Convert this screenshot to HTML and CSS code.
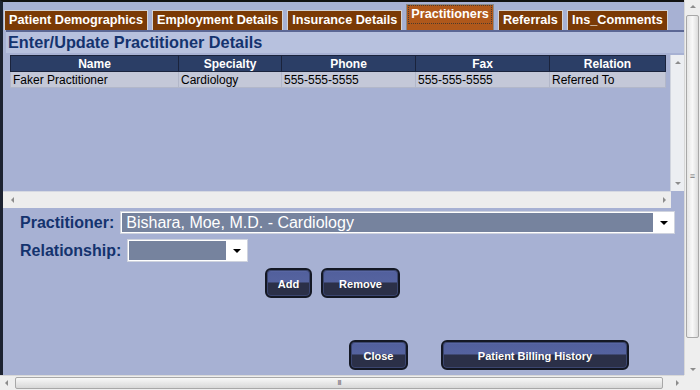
FILE: index.html
```html
<!DOCTYPE html>
<html lang="en">
<head>
  <meta charset="UTF-8">
  <title>Practitioners</title>
  <link rel="stylesheet" href="styles.css">
</head>
<body>
  <div class="window">
    <div class="viewport">
      <div class="tabs">
        <div class="tab">Patient Demographics</div>
        <div class="tab">Employment Details</div>
        <div class="tab">Insurance Details</div>
        <div class="tab active"><span>Practitioners</span></div>
        <div class="tab">Referrals</div>
        <div class="tab">Ins_Comments</div>
      </div>

      <div class="title">Enter/Update Practitioner Details</div>

      <div class="gridbox">
        <div class="grid-main">
          <div class="grid-table">
            <table>
              <tr>
                <th class="c-name">Name</th>
                <th class="c-spec">Specialty</th>
                <th class="c-phone">Phone</th>
                <th class="c-fax">Fax</th>
                <th class="c-rel">Relation</th>
              </tr>
              <tr>
                <td>Faker Practitioner</td>
                <td>Cardiology</td>
                <td>555-555-5555</td>
                <td>555-555-5555</td>
                <td>Referred To</td>
              </tr>
            </table>
          </div>
          <div class="vbar small">
            <span class="arr up"></span>
            <span class="arr down"></span>
          </div>
        </div>
        <div class="hbar small">
          <span class="arr left"></span>
          <span class="arr right"></span>
        </div>
      </div>

      <div class="form">
        <div class="form-row">
          <label class="lbl">Practitioner:</label>
          <div class="select wide">
            <div class="sel-value">Bishara, Moe, M.D. - Cardiology</div>
            <span class="caret"></span>
          </div>
        </div>
        <div class="form-row">
          <label class="lbl">Relationship:</label>
          <div class="select narrow">
            <div class="sel-value"></div>
            <span class="caret"></span>
          </div>
        </div>
      </div>

      <div class="actions">
        <button class="btn b-add">Add</button>
        <button class="btn b-remove">Remove</button>
      </div>

      <div class="footer">
        <button class="btn b-close">Close</button>
        <button class="btn b-history">Patient Billing History</button>
      </div>
    </div>

    <div class="vbar outer">
      <span class="arr up"></span>
      <div class="thumb-v"><span class="grip">&#8801;</span></div>
      <span class="arr down"></span>
    </div>
    <div class="hbar outer">
      <span class="arr left"></span>
      <div class="thumb-h"><span class="grip">III</span></div>
      <span class="arr right"></span>
    </div>
    <div class="corner"></div>
  </div>
</body>
</html>
```

FILE: styles.css
```css
body {
  margin: 0;
  font-family: 'Liberation Sans', Arial, sans-serif;
  overflow: hidden;
}

.window {
  width: 700px;
  height: 390px;
  display: grid;
  grid-template-columns: 1fr 16px;
  grid-template-rows: 1fr 15px;
  background: #f0f0f0;
}

.viewport {
  background: #a7b1d3;
  border-top: 2px solid #111;
  border-left: 3px solid #1c2230;
  overflow: hidden;
}

/* tabs */
.tabs {
  display: flex;
  align-items: flex-end;
  gap: 4px;
  padding: 6px 0 0 1px;
  height: 22px;
}

.tab {
  flex-shrink: 0;
  white-space: nowrap;
  background: #7a3a05;
  color: #fff;
  font-weight: bold;
  font-size: 12.7px;
  height: 19px;
  line-height: 19px;
  padding: 0 4px;
  border: 1px solid #d4d4d4;
  border-bottom: none;
}

.tab.active {
  background: #b0581b;
  height: 21px;
  line-height: 17px;
  padding: 1px 2px 3px;
  border-color: #8a8a8a;
}

.tab.active span {
  display: block;
  padding: 0 2px;
  outline: 1px dotted #4d3a2c;
}

.title {
  margin-left: 3px;
  background: #b7c1de;
  border-top: 2px solid #5b6794;
  color: #14336e;
  font-weight: bold;
  font-size: 16.3px;
  height: 21px;
  line-height: 20px;
  padding-left: 2px;
}

/* practitioner grid */
.gridbox {
  margin-top: 2px;
  display: flex;
  flex-direction: column;
}

.grid-main {
  display: flex;
  height: 136px;
}

.grid-table {
  flex: 1;
  padding-left: 7px;
}

table {
  border-collapse: collapse;
  width: 656px;
  font-size: 12px;
}

th {
  background: #2b3e66;
  color: #fff;
  font-weight: bold;
  height: 15px;
  padding: 0;
  border: 1px solid #1a233c;
}

td {
  background: #c4c8d8;
  color: #000;
  height: 15px;
  padding: 0 0 0 2px;
  border: 1px solid #b2b7c9;
  text-align: left;
}

.c-name { width: 167px; }
.c-spec { width: 102px; }
.c-phone { width: 133px; }
.c-fax { width: 133px; }

.vbar {
  background: #eceef2;
  position: relative;
}

.vbar.small {
  width: 13px;
  border-left: 1px solid #d0d4de;
}

.hbar {
  background: #ededed;
  position: relative;
}

.hbar.small {
  height: 16px;
  margin-right: 13px;
  border-top: 1px solid #d6d9e2;
}

.arr {
  position: absolute;
  width: 0;
  height: 0;
  border: 3px solid transparent;
}

.arr.up {
  top: 6px;
  left: 4px;
  border-bottom-color: #8c8c8c;
  border-top-width: 0;
}

.arr.down {
  bottom: 6px;
  left: 4px;
  border-top-color: #8c8c8c;
  border-bottom-width: 0;
}

.arr.left {
  left: 8px;
  top: 5px;
  border-right-color: #8c8c8c;
  border-left-width: 0;
}

.arr.right {
  right: 5px;
  top: 5px;
  border-left-color: #8c8c8c;
  border-right-width: 0;
}

/* form */
.form {
  padding: 3px 0 0 17px;
  display: flex;
  flex-direction: column;
  gap: 5px;
}

.form-row {
  display: flex;
  align-items: center;
}

.lbl {
  color: #14336e;
  font-weight: bold;
  font-size: 16px;
  margin-right: 6px;
}

.select {
  display: flex;
  align-items: center;
  background: #fff;
  border: 1px solid #cfd3de;
  height: 19px;
  padding: 1px;
}

.select.wide {
  width: 551px;
}

.select.narrow {
  width: 117px;
}

.sel-value {
  flex: 1;
  height: 19px;
  background: #76839e;
  color: #fff;
  font-size: 16px;
  line-height: 19px;
  padding-left: 4px;
}

.caret {
  width: 0;
  height: 0;
  margin: 0 5px 0 7px;
  border: 4px solid transparent;
  border-top: 4px solid #000;
  border-bottom-width: 0;
}

/* buttons */
.actions {
  display: flex;
  gap: 9px;
  padding: 6px 0 0 262px;
}

.footer {
  display: flex;
  gap: 33px;
  padding: 42px 0 0 346px;
}

.btn {
  height: 30px;
  border: 2px solid #141824;
  border-radius: 6px;
  background: linear-gradient(#6a78b6 0, #52609d 2px, #55639f 46%, #2b3048 50%, #2b3048 100%);
  box-shadow: inset 0 0 0 1px #3b4670;
  color: #fff;
  font-family: 'Liberation Sans', Arial, sans-serif;
  font-weight: bold;
  font-size: 11px;
  padding: 2px 0 0;
  cursor: pointer;
}

.b-add { width: 47px; }
.b-remove { width: 79px; }
.b-close { width: 59px; }
.b-history { width: 188px; }

/* window scrollbars */
.vbar.outer {
  background: #eeeeee;
  border-left: 1px solid #d8d8d8;
}

.vbar.outer .arr.up { top: 5px; left: 5px; }
.vbar.outer .arr.down { bottom: 4px; left: 5px; }

.thumb-v {
  position: absolute;
  top: 15px;
  bottom: 37px;
  left: 1px;
  right: 1px;
  background: linear-gradient(90deg, #e6e6e6, #f8f8f8 50%, #dcdcdc);
  border: 1px solid #a8a8a8;
  border-radius: 2px;
  display: flex;
  align-items: center;
  justify-content: center;
}

.grip {
  color: #777;
  font-size: 9px;
  line-height: 1;
}

.hbar.outer {
  background: #eeeeee;
  border-top: 1px solid #d8d8d8;
}

.hbar.outer .arr.left { left: 5px; top: 4px; }
.hbar.outer .arr.right { right: 5px; top: 4px; }

.thumb-h {
  position: absolute;
  left: 15px;
  right: 21px;
  top: 1px;
  bottom: 1px;
  background: linear-gradient(#f8f8f8, #e8e8e8 50%, #d8d8d8);
  border: 1px solid #a8a8a8;
  border-radius: 2px;
  display: flex;
  align-items: center;
  justify-content: center;
}

.thumb-h .grip {
  letter-spacing: -1px;
  font-size: 8px;
}

.corner {
  background: #eeeeee;
}
```
